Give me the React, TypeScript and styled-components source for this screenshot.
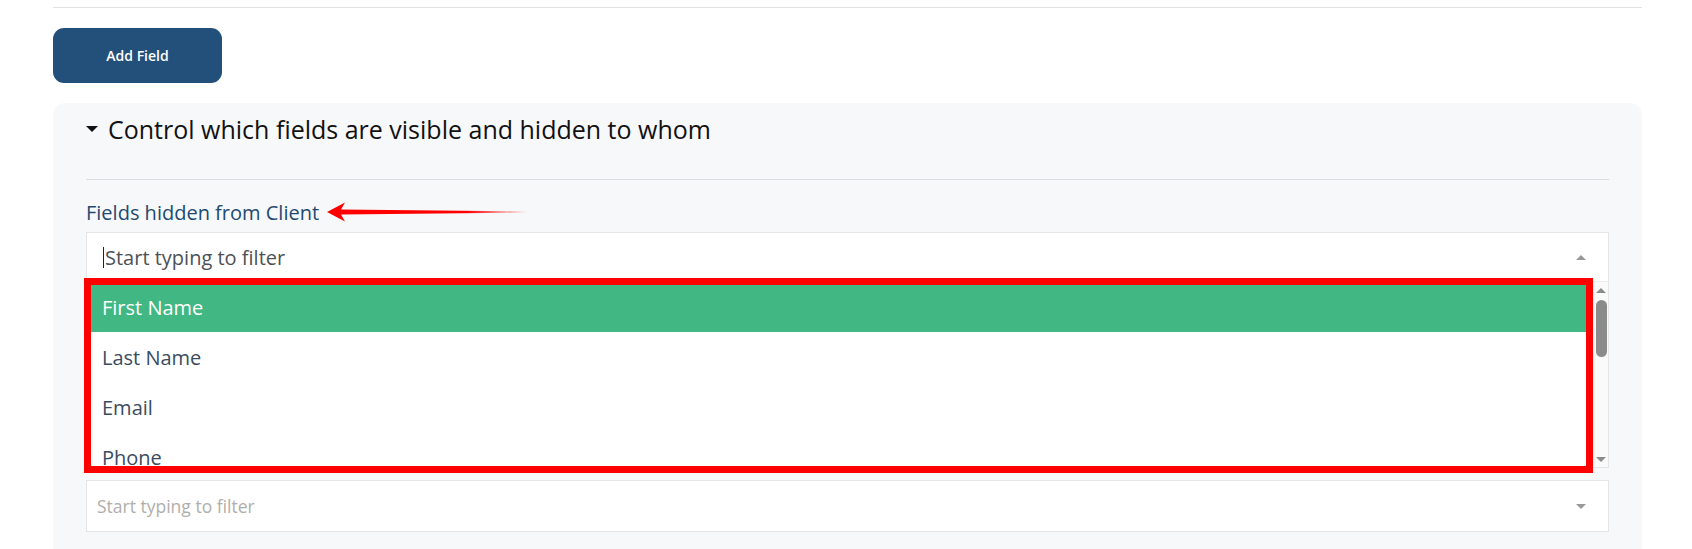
import React from "react";
import styled, { createGlobalStyle } from "styled-components";

const GlobalStyle = createGlobalStyle`
  html, body {
    margin: 0;
    padding: 0;
    background: #fff;
    font-family: "Open Sans", "Noto Sans", sans-serif;
  }
`;

const Page = styled.div`
  padding: 7px 50px 0 53px;
  display: flex;
  flex-direction: column;
  align-items: flex-start;
`;

const TopRule = styled.div`
  align-self: stretch;
  height: 1px;
  background: #e1e1e1;
`;

const AddButton = styled.button`
  margin-top: 20px;
  width: 169px;
  height: 55px;
  border: none;
  border-radius: 11px;
  background: #22507a;
  color: #fff;
  font-family: inherit;
  font-weight: 600;
  font-size: 14px;
  cursor: pointer;
`;

const Panel = styled.section`
  align-self: stretch;
  margin-top: 20px;
  background: #f7f8fa;
  border-radius: 12px 12px 0 0;
  padding: 11px 33px 40px 33px;
`;

const Summary = styled.div`
  display: flex;
  align-items: center;
  gap: 10px;
  height: 30px;
  font-size: 25px;
  color: #111;
`;

const Caret = styled.span<{ $dir: "up" | "down"; $size?: number; $color?: string }>`
  width: 0;
  height: 0;
  border-left: ${(p) => p.$size ?? 5}px solid transparent;
  border-right: ${(p) => p.$size ?? 5}px solid transparent;
  ${(p) =>
    p.$dir === "down"
      ? `border-top: ${p.$size ?? 5}px solid ${p.$color ?? "#999"};`
      : `border-bottom: ${p.$size ?? 5}px solid ${p.$color ?? "#999"};`}
`;

const Divider = styled.div`
  height: 1px;
  background: #dcdde0;
  margin-top: 35px;
`;

const LabelRow = styled.div`
  display: flex;
  align-items: center;
  gap: 8px;
  margin-top: 20px;
  height: 24px;
`;

const Label = styled.span`
  font-size: 20px;
  font-weight: 500;
  color: #1f4a70;
`;

const Field = styled.div`
  position: relative;
  margin-top: 8px;
`;

const SelectBox = styled.div<{ $open?: boolean }>`
  height: ${(p) => (p.$open ? "50px" : "52px")};
  box-sizing: border-box;
  background: #fff;
  border: 1px solid #e4e5e8;
  ${(p) => (p.$open ? "border-bottom-color: #ececec;" : "")}
  display: flex;
  align-items: center;
  padding: 0 22px 0 ${(p) => (p.$open ? "16px" : "10px")};
`;

const Cursor = styled.span`
  width: 1px;
  height: 21px;
  background: #222;
  margin-right: 1px;
`;

const Placeholder = styled.span<{ $muted?: boolean }>`
  flex: 1;
  font-size: ${(p) => (p.$muted ? "17.5px" : "20px")};
  color: ${(p) => (p.$muted ? "#b0aeab" : "#4d5156")};
`;

const List = styled.div`
  display: flex;
  height: 186px;
  background: #fff;
  border: 1px solid #e4e5e8;
  border-top: none;
  box-sizing: border-box;
  overflow: hidden;
`;

const Options = styled.ul`
  flex: 1;
  list-style: none;
  margin: 0;
  padding: 0;
`;

const Option = styled.li<{ $active?: boolean }>`
  height: 50px;
  display: flex;
  align-items: center;
  padding-left: 15px;
  font-size: 20px;
  background: ${(p) => (p.$active ? "#41b883" : "#fff")};
  color: ${(p) => (p.$active ? "#fff" : "#3a4c60")};
`;

const Scrollbar = styled.div`
  width: 15px;
  background: #fafafa;
  border-left: 1px solid #f0f0f0;
  display: flex;
  flex-direction: column;
  align-items: center;
  padding: 6px 0 5px;
  box-sizing: border-box;
`;

const Thumb = styled.div`
  width: 11px;
  height: 57px;
  margin-top: 7px;
  border-radius: 6px;
  background: #8b8b8b;
`;

const Spacer = styled.div`
  flex: 1;
`;

const Highlight = styled.div`
  position: absolute;
  left: -2px;
  top: 46px;
  width: 1509px;
  height: 195px;
  box-sizing: border-box;
  border: 7px solid #ff0000;
  pointer-events: none;
`;

const SecondField = styled.div`
  margin-top: 12px;
`;

function Arrow() {
  return (
    <svg width="204" height="22" viewBox="0 0 204 22">
      <defs>
        <linearGradient id="fade" x1="0" x2="1" y1="0" y2="0">
          <stop offset="0" stopColor="#ff0000" />
          <stop offset="0.7" stopColor="#ff0000" />
          <stop offset="1" stopColor="#ff0000" stopOpacity="0" />
        </linearGradient>
      </defs>
      <path
        d="M0 11 L18 1.5 L14 8.5 L200 10.3 L200 11.7 L14 13.5 L18 20.5 Z"
        fill="url(#fade)"
      />
    </svg>
  );
}

const fields = ["First Name", "Last Name", "Email", "Phone"];

export default function App() {
  return (
    <>
      <GlobalStyle />
      <Page>
        <TopRule />
        <AddButton>Add Field</AddButton>
        <Panel>
          <Summary>
            <Caret $dir="down" $size={6} $color="#111" />
            Control which fields are visible and hidden to whom
          </Summary>
          <Divider />
          <LabelRow>
            <Label>Fields hidden from Client</Label>
            <Arrow />
          </LabelRow>
          <Field>
            <SelectBox $open>
              <Cursor />
              <Placeholder>Start typing to filter</Placeholder>
              <Caret $dir="up" />
            </SelectBox>
            <List>
              <Options>
                {fields.map((f, i) => (
                  <Option key={f} $active={i === 0}>
                    {f}
                  </Option>
                ))}
              </Options>
              <Scrollbar>
                <Caret $dir="up" $size={5} $color="#8b8b8b" />
                <Thumb />
                <Spacer />
                <Caret $dir="down" $size={5} $color="#8b8b8b" />
              </Scrollbar>
            </List>
            <Highlight />
          </Field>
          <SecondField>
            <SelectBox>
              <Placeholder $muted>Start typing to filter</Placeholder>
              <Caret $dir="down" />
            </SelectBox>
          </SecondField>
        </Panel>
      </Page>
    </>
  );
}
